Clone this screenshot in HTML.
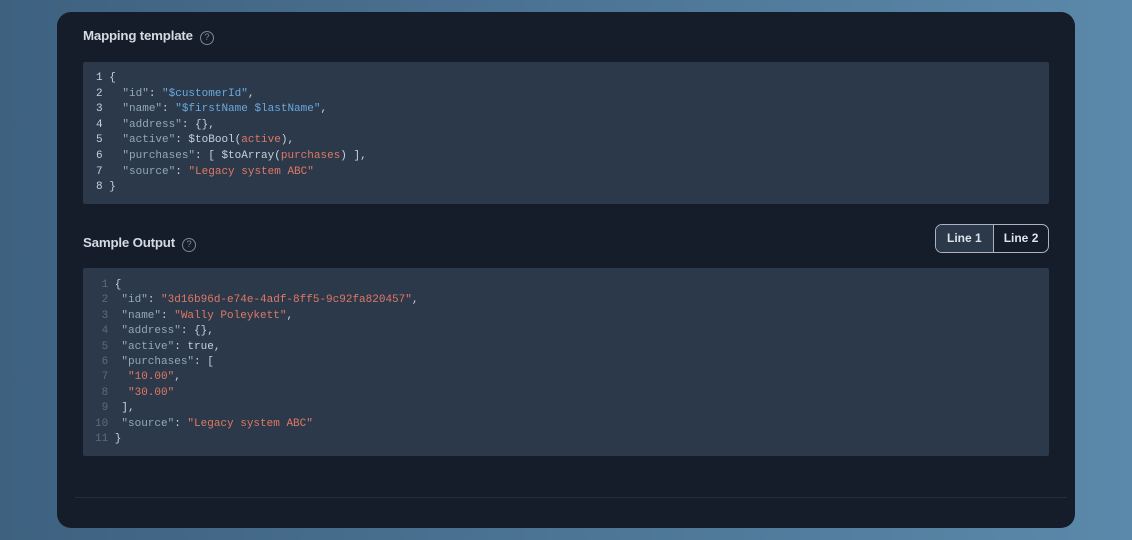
<!DOCTYPE html>
<html><head><style>
body{margin:0;width:1132px;height:540px;overflow:hidden;background:linear-gradient(90deg,#3e6180 0%,#4c7494 50%,#5b89aa 100%);font-family:"Liberation Sans",sans-serif}
.panel{position:absolute;left:57px;top:12px;width:1018px;height:516px;background:#161d2a;border-radius:14px}
.title{position:absolute;left:26px;color:#d5dbe3;font-size:13.3px;font-weight:bold;letter-spacing:-0.2px}
.q{display:inline-block;width:12px;height:12px;border:1.2px solid #7b8796;border-radius:50%;color:#7b8796;font-size:9.5px;text-align:center;line-height:12px;margin-left:7px;vertical-align:0px;font-weight:normal}
.box{position:absolute;left:26px;width:966px;background:#2b394b;border-radius:2px}
pre{margin:0;font-family:"Liberation Mono",monospace;font-size:11px;color:#c9d1da}
.k{color:#93a8ba}.b{color:#6aa8dc}.r{color:#e07863}.ln{color:#c9d1da}.ln2{color:#5d6b7b}
.btns{position:absolute;left:878px;top:212px;height:27px;border:1.5px solid #aab3bf;border-radius:7px;display:flex;overflow:hidden;font-size:12px;font-weight:bold;color:#dfe4ea}
.btns div{line-height:27px;padding:0 11px 0 11px}
</style></head><body>
<div class="panel">
<div class="title" style="top:16px">Mapping template<span class="q">?</span></div>
<div class="box" style="top:50px;height:142px">
<pre style="position:absolute;left:13px;top:9px;line-height:15.6px"><span class="ln">1</span> {
<span class="ln">2</span>   <span class="k">"id"</span>: <span class="b">"$customerId"</span>,
<span class="ln">3</span>   <span class="k">"name"</span>: <span class="b">"$firstName $lastName"</span>,
<span class="ln">4</span>   <span class="k">"address"</span>: {},
<span class="ln">5</span>   <span class="k">"active"</span>: $toBool(<span class="r">active</span>),
<span class="ln">6</span>   <span class="k">"purchases"</span>: [ $toArray(<span class="r">purchases</span>) ],
<span class="ln">7</span>   <span class="k">"source"</span>: <span class="r">"Legacy system ABC"</span>
<span class="ln">8</span> }</pre>
</div>
<div class="title" style="top:223px">Sample Output<span class="q">?</span></div>
<div class="btns"><div style="background:#2b394b;border-right:1.5px solid #aab3bf;padding:0 11px">Line 1</div><div style="padding:0 10px">Line 2</div></div>
<div class="box" style="top:256px;height:188px">
<pre style="position:absolute;left:12px;top:10px;line-height:15.4px"><span class="ln2"> 1</span> {
<span class="ln2"> 2</span>  <span class="k">"id"</span>: <span class="r">"3d16b96d-e74e-4adf-8ff5-9c92fa820457"</span>,
<span class="ln2"> 3</span>  <span class="k">"name"</span>: <span class="r">"Wally Poleykett"</span>,
<span class="ln2"> 4</span>  <span class="k">"address"</span>: {},
<span class="ln2"> 5</span>  <span class="k">"active"</span>: true,
<span class="ln2"> 6</span>  <span class="k">"purchases"</span>: [
<span class="ln2"> 7</span>   <span class="r">"10.00"</span>,
<span class="ln2"> 8</span>   <span class="r">"30.00"</span>
<span class="ln2"> 9</span>  ],
<span class="ln2">10</span>  <span class="k">"source"</span>: <span class="r">"Legacy system ABC"</span>
<span class="ln2">11</span> }</pre>
</div>
<div style="position:absolute;left:18px;right:8px;top:485px;height:1px;background:#252d3a"></div>
</div>
</body></html>
